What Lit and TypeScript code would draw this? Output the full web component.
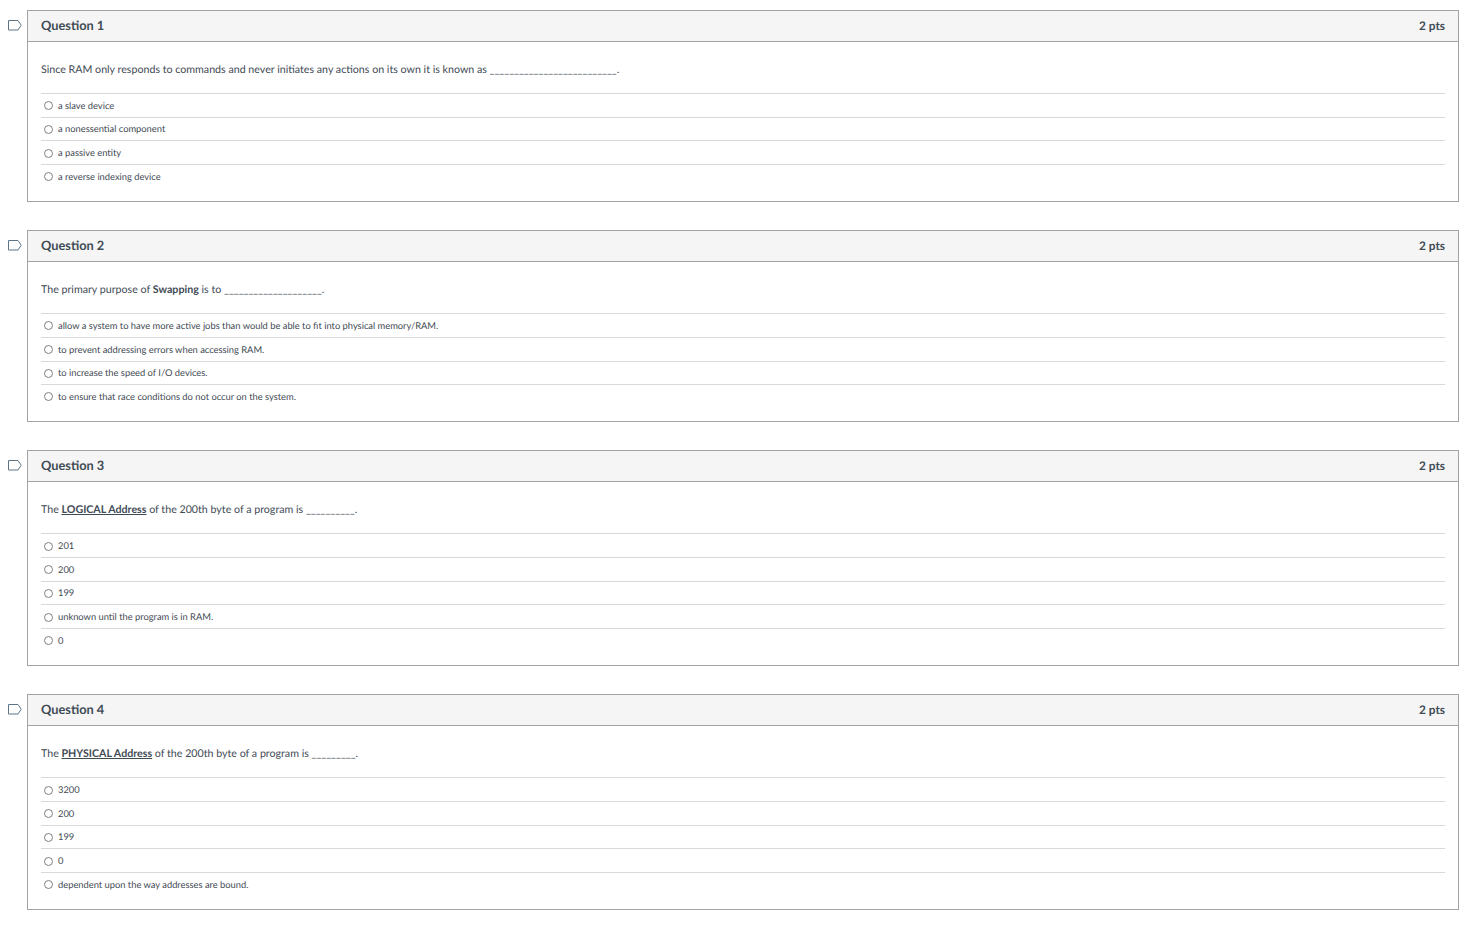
import { LitElement, html, css } from "lit";
import { customElement } from "lit/decorators.js";

type Q = { n: number; text: unknown; options: string[] };

const QUESTIONS: Q[] = [
  {
    n: 1,
    text: html`Since RAM only responds to commands and never initiates any actions on its own it is known as __________________________.`,
    options: ["a slave device", "a nonessential component", "a passive entity", "a reverse indexing device"],
  },
  {
    n: 2,
    text: html`The primary purpose of <strong>Swapping</strong> is to ____________________.`,
    options: [
      "allow a system to have more active jobs than would be able to fit into physical memory/RAM.",
      "to prevent addressing errors when accessing RAM.",
      "to increase the speed of I/O devices.",
      "to ensure that race conditions do not occur on the system.",
    ],
  },
  {
    n: 3,
    text: html`The <strong><u>LOGICAL Address</u></strong> of the 200th byte of a program is __________.`,
    options: ["201", "200", "199", "unknown until the program is in RAM.", "0"],
  },
  {
    n: 4,
    text: html`The <strong><u>PHYSICAL Address</u></strong> of the 200th byte of a program is _________.`,
    options: ["3200", "200", "199", "0", "dependent upon the way addresses are bound."],
  },
];

@customElement("app-root")
export class AppRoot extends LitElement {
  static styles = css`
    :host {
      display: block;
      font-family: Lato, "Open Sans", sans-serif;
      color: #3f4b55;
      padding: 10px 25px 0 8px;
      text-rendering: geometricPrecision;
    }
    .question {
      display: flex;
      align-items: flex-start;
      margin-bottom: 28.06px;
    }
    .question:nth-child(3) {
      margin-bottom: 28.3px;
    }
    .flag-col {
      width: 19px;
      flex: none;
      padding-top: 10px;
      line-height: 0;
    }
    .flag {
      width: 14px;
      height: 10.5px;
      display: block;
    }
    .card {
      flex: 1;
      min-width: 0;
      border: 1px solid #a3a3a3;
      box-sizing: border-box;
    }
    .head {
      display: flex;
      justify-content: space-between;
      align-items: center;
      height: 31px;
      box-sizing: border-box;
      padding: 0 13px 1px;
      background: #f5f5f5;
      border-bottom: 1px solid #a3a3a3;
      font-weight: 700;
    }
    .title {
      font-size: 12.8px;
      margin-bottom: 1px;
    }
    .pts {
      font-size: 11.8px;
    }
    .body {
      padding: 20px 13px 13.37px;
    }
    .text {
      font-size: 10.67px;
      line-height: 15px;
      height: 31.1px;
    }
    .opt {
      display: flex;
      align-items: center;
      height: 23.66px;
      box-sizing: border-box;
      border-top: 1px solid #d9d9d9;
      padding: 0 0 0.3px 3px;
      font-size: 9.33px;
    }
    .radio {
      width: 9px;
      height: 9px;
      border: 1px solid #808080;
      border-radius: 50%;
      box-sizing: border-box;
      margin-right: 5px;
      flex: none;
      background: #fff;
      position: relative;
      top: 0.6px;
    }
  `;

  render() {
    return QUESTIONS.map(
      (q) => html`
        <div class="question">
          <div class="flag-col">
            <svg class="flag" viewBox="0 0 14 10.5" fill="none" stroke="#5f7585" stroke-width="1">
              <path d="M0.5 0.5H10L13.2 5.25L10 10H0.5Z" />
            </svg>
          </div>
          <div class="card">
            <div class="head">
              <span class="title">Question ${q.n}</span>
              <span class="pts">2 pts</span>
            </div>
            <div class="body">
              <div class="text">${q.text}</div>
              ${q.options.map(
                (o) => html`<div class="opt"><span class="radio"></span><span>${o}</span></div>`
              )}
            </div>
          </div>
        </div>
      `
    );
  }
}
